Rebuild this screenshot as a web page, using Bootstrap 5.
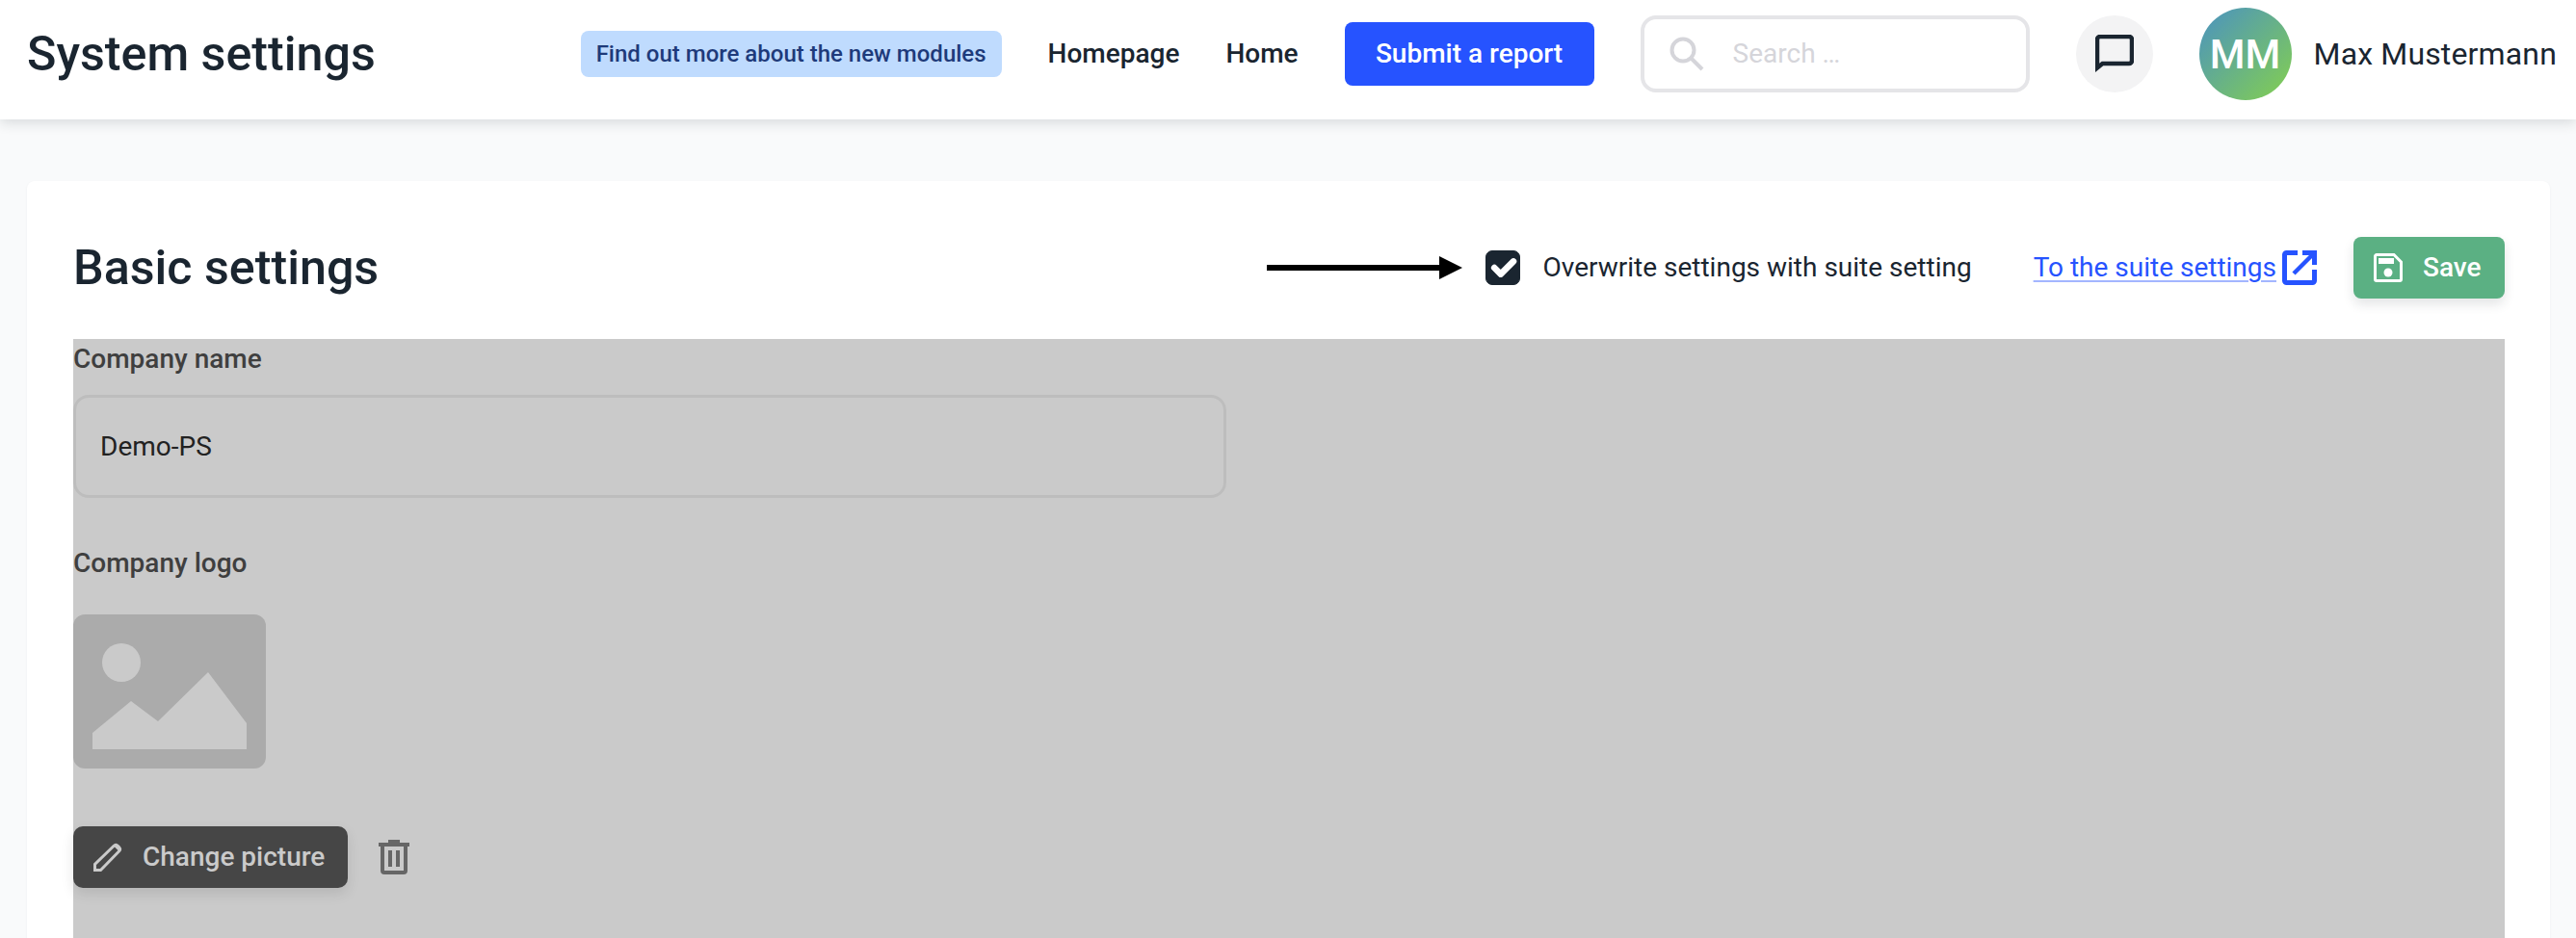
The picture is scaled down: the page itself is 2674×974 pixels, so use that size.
<!DOCTYPE html>
<html lang="en">
<head>
<meta charset="utf-8">
<title>System settings</title>
<link href="https://cdn.jsdelivr.net/npm/bootstrap@5.3.0/dist/css/bootstrap.min.css" rel="stylesheet">
<style>
html,body{height:974px;overflow:hidden}
body{background:#f9fafb;font-family:Roboto,"Liberation Sans",sans-serif;color:#1a2530;font-size:28px}
.top-bar{height:124px;background:#fff;padding:0 20px 12px 28px;box-shadow:0 4px 12px rgba(30,40,50,.14);position:relative;z-index:2}
.page-title{font-size:50.2px;font-weight:500;margin:0;line-height:1;color:#1a2530}
.info-chip{height:48px;padding:0 16px;background:#bfdbfe;color:#1e3a7a;border-radius:8px;font-size:24px;font-weight:500;white-space:nowrap}
.top-link{font-size:28px;font-weight:500;color:#1a2530;text-decoration:none;white-space:nowrap}
.report-btn{height:66px;width:259px;background:#2653ff;border:0;border-radius:8px;color:#fff;font-size:28px;font-weight:500;padding:0}
.search-box{width:404px;height:80px;border:4px solid #e5e5e8;border-radius:16px;padding-left:26px;gap:30px;color:#d5d5da;font-size:28px}
.chat-btn{width:80px;height:80px;background:#f3f3f4}
.avatar-pic{width:96px;height:96px;background:linear-gradient(135deg,#4a92c2,#84d04e);color:#fff;font-size:42px;font-weight:500}
.user-name{font-size:32px;font-weight:400;letter-spacing:.15px;margin-left:23px;white-space:nowrap}
.sheet{margin:64px 27px 0 28px;height:800px;background:#fff;border-radius:8px;padding:0 47px 0 48px;box-shadow:0 1px 3px rgba(30,40,50,.05)}
.sheet-head{height:164px;padding-top:16px}
.sheet-title{font-size:50.2px;font-weight:500;margin:0;line-height:1}
.arrow-mark{width:203px;height:24px;margin-right:24px}
.suite-check{width:36px;height:36px;margin:0 23px 0 0;background-color:#1a2530;border-color:#1a2530;border-radius:6px}
.suite-check:checked{background-color:#1a2530;border-color:#1a2530;background-size:44px;background-position:center}
.check-text{margin:0 64px 0 0;font-size:28px;color:#1a2530;white-space:nowrap}
.suite-link{color:#2653ff;font-size:28px;text-decoration-color:#a3b6ff;text-decoration-thickness:2px;text-underline-offset:4px;white-space:nowrap}
.ext-icon{width:36px;height:36px;margin:0 38px 0 6px}
.save-btn{width:157px;height:64px;background:#5bb083;border:0;border-radius:8px;color:#fff;font-size:28px;font-weight:500;padding:0 0 0 21px;gap:21px;box-shadow:0 6px 12px rgba(30,40,50,.12)}
.dim-area{background:#cacaca;height:622px;padding-top:1px}
.field-label{font-size:28px;font-weight:500;color:#3f3f3f;line-height:36px;margin:2px 0 19px;display:block}
.name-field{width:1197px;height:107px;border:3px solid #bdbdbd;border-radius:16px;background:transparent;padding:0 25px;font-size:28px;color:#222;font-family:inherit}
.logo-label{margin-top:50px;margin-bottom:35px}
.logo-pic{width:200px;height:160px;display:block;margin-bottom:60px}
.change-btn{width:285px;height:64px;background:#464646;border:0;border-radius:10px;color:#cacaca;font-size:28px;font-weight:500;padding:0 0 0 21px;gap:21px;box-shadow:0 6px 14px rgba(0,0,0,.1)}
.trash-mark{width:32px;height:36px;margin-left:32px}
</style>
</head>
<body>
<header class="top-bar d-flex align-items-center">
  <h1 class="page-title me-auto">System settings</h1>
  <div class="d-flex align-items-center gap-5">
    <a class="info-chip d-flex align-items-center text-decoration-none" href="#">Find out more about the new modules</a>
    <a class="top-link" href="#">Homepage</a>
    <a class="top-link" href="#">Home</a>
    <button class="report-btn btn" type="button">Submit a report</button>
    <div class="search-box d-flex align-items-center">
      <svg width="36" height="36" viewBox="0 0 36 36" fill="none" stroke="#d5d5da" stroke-width="4"><circle cx="14" cy="14" r="11.500"/><path d="M22.500 22.500 34 34"/></svg>
      <span>Search …</span>
    </div>
    <button class="chat-btn btn rounded-circle d-flex align-items-center justify-content-center p-0" type="button" aria-label="Messages">
      <svg width="40" height="40" viewBox="0 0 40 40" fill="none" stroke="#1a2530" stroke-width="4.500"><path d="M2 5a3 3 0 0 1 3-3h30a3 3 0 0 1 3 3v22a3 3 0 0 1-3 3H7.500L2 34.500z"/></svg>
    </button>
    <div class="d-flex align-items-center">
      <div class="avatar-pic rounded-circle d-flex align-items-center justify-content-center">MM</div>
      <span class="user-name">Max Mustermann</span>
    </div>
  </div>
</header>
<main class="sheet">
  <div class="sheet-head d-flex align-items-center">
    <h2 class="sheet-title me-auto">Basic settings</h2>
    <svg class="arrow-mark" viewBox="0 0 203 24"><path d="M0 9h179V0l24 12-24 12V15H0z" fill="#000"/></svg>
    <input class="form-check-input suite-check" type="checkbox" id="suite" checked>
    <label class="check-text" for="suite">Overwrite settings with suite setting</label>
    <a class="suite-link" href="#">To the suite settings</a>
    <svg class="ext-icon" viewBox="0 0 36 36" fill="none" stroke="#2653ff" stroke-width="5"><path d="M16 2.500H4.500a2 2 0 0 0-2 2v27a2 2 0 0 0 2 2h27a2 2 0 0 0 2-2V20"/><path d="M12 24 33 3" stroke-width="4.500"/><path d="M21 2.500h12.500V15"/></svg>
    <button class="save-btn btn d-flex align-items-center" type="button">
      <svg width="30" height="30" viewBox="0 0 30 30" fill="none" stroke="#fff" stroke-width="3"><path d="M3 1.500h18l7.500 7.500v18a1.500 1.500 0 0 1-1.500 1.500H3A1.500 1.500 0 0 1 1.500 27V3A1.500 1.500 0 0 1 3 1.500z"/><path d="M5 5h16v6H5z" fill="#fff" stroke="none"/><circle cx="15" cy="20" r="4.500" fill="#fff" stroke="none"/></svg>
      <span>Save</span>
    </button>
  </div>
  <section class="dim-area">
    <label class="field-label" for="company">Company name</label>
    <input class="name-field d-block" id="company" type="text" value="Demo-PS">
    <span class="field-label logo-label">Company logo</span>
    <svg class="logo-pic" viewBox="0 0 200 160"><rect width="200" height="160" rx="12" fill="#ababab"/><circle cx="50" cy="50" r="20" fill="#cacaca"/><path d="M20 123 60 90l28 21 52-51 40 53v27H20z" fill="#cacaca"/></svg>
    <div class="d-flex align-items-center">
      <button class="change-btn btn d-flex align-items-center" type="button">
        <svg width="30" height="30" viewBox="0 0 30 30" fill="none" stroke="#cacaca" stroke-width="3"><path d="M1.500 28.500V22.500L21 3.500c1.500-1.500 3-1.500 4.500 0l1 1c1.500 1.500 1.500 3 0 4.500L7.500 28.500z"/><path d="M21 3.500c1.500-1.500 3-1.500 4.500 0l1 1c1.500 1.500 1.500 3 0 4.500z" fill="#cacaca" stroke="none"/></svg>
        <span>Change picture</span>
      </button>
      <svg class="trash-mark" viewBox="0 0 32 36" fill="none" stroke="#666" stroke-width="4"><path d="M0 5h32"/><path d="M10 1.500h12" stroke-width="3"/><path d="M4 5v27a2 2 0 0 0 2 2h20a2 2 0 0 0 2-2V5"/><path d="M12 11v17M20 11v17"/></svg>
    </div>
  </section>
</main>
<script src="https://cdn.jsdelivr.net/npm/bootstrap@5.3.0/dist/js/bootstrap.bundle.min.js"></script>
</body>
</html>
